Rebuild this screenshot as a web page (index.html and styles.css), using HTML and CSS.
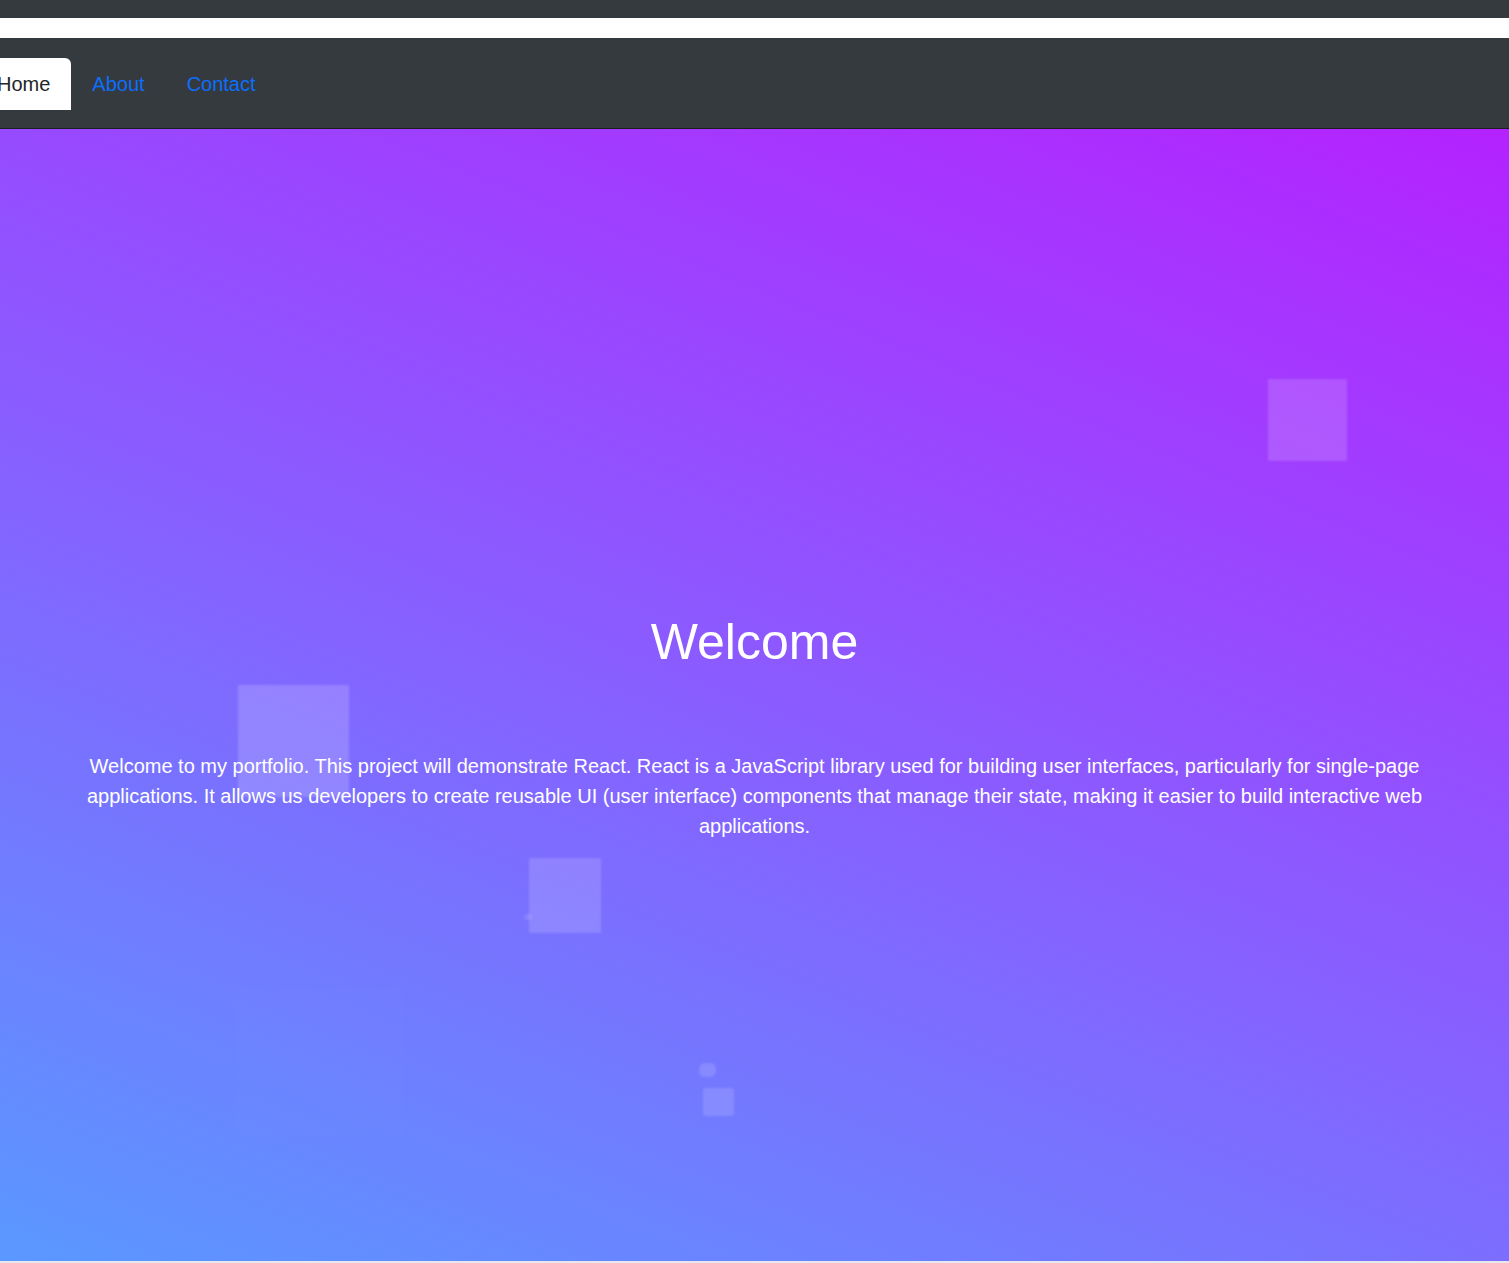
FILE: index.html
```html
<!DOCTYPE html>
<html lang="en">
<head>
<meta charset="utf-8">
<title>Portfolio</title>
<link rel="stylesheet" href="styles.css">
</head>
<body>
  <div class="topbar"></div>
  <div class="strip"></div>
  <nav class="navbar">
    <ul class="tabs">
      <li><a class="tab active" href="#">Home</a></li>
      <li><a class="tab" href="#">About</a></li>
      <li><a class="tab" href="#">Contact</a></li>
    </ul>
  </nav>
  <main class="hero">
    <ul class="squares" aria-hidden="true">
      <li class="sq sq1"></li>
      <li class="sq sq2"></li>
      <li class="sq sq3"></li>
      <li class="sq sq3b"></li>
      <li class="sq sq4"></li>
      <li class="sq sq5"></li>
      <li class="sq sq6"></li>
    </ul>
    <div class="content">
      <h1 class="title">Welcome</h1>
      <p class="intro">Welcome to my portfolio. This project will demonstrate React. React is a JavaScript library used for building user interfaces, particularly for single-page applications. It allows us developers to create reusable UI (user interface) components that manage their state, making it easier to build interactive web applications.</p>
    </div>
  </main>
  <div class="bottom"></div>
</body>
</html>
```

FILE: styles.css
```css
* { box-sizing: border-box; }

html, body {
  margin: 0;
  padding: 0;
}

body {
  font-family: "Liberation Sans", Arial, sans-serif;
  background: #e6e8ec;
  overflow: hidden;
}

.topbar {
  height: 18px;
  background: #343a3e;
}

.strip {
  height: 20px;
  background: #ffffff;
}

.navbar {
  height: 91px;
  background: #343a3e;
  border-bottom: 1px solid #1b1f22;
  padding-top: 20px;
}

.tabs {
  list-style: none;
  margin: 0 0 0 -24px;
  padding: 0;
  display: flex;
}

.tab {
  display: block;
  padding: 11px 21px;
  font-size: 20px;
  line-height: 30px;
  color: #0d6efd;
  text-decoration: none;
  border-radius: 6px 6px 0 0;
}

.tab.active {
  background: #ffffff;
  color: #212529;
}

.hero {
  position: relative;
  height: 1132px;
  overflow: hidden;
  background: linear-gradient(22deg, #5a98ff 0%, #8a5cff 50%, #b422ff 100%);
  display: flex;
  flex-direction: column;
  justify-content: center;
  padding-top: 63px;
}

.squares {
  position: absolute;
  inset: 0;
  margin: 0;
  padding: 0;
  list-style: none;
}

.sq {
  position: absolute;
  background: rgba(255, 255, 255, 0.16);
  filter: blur(1.2px);
}

.sq1 { left: 1268px; top: 250px; width: 79px; height: 82px; background: rgba(255,255,255,0.15); }
.sq2 { left: 238px; top: 556px; width: 111px; height: 112px; background: rgba(255,255,255,0.17); }
.sq3 { left: 529px; top: 729px; width: 72px; height: 75px; background: rgba(255,255,255,0.15); }
.sq3b { left: 524px; top: 785px; width: 8px; height: 6px; border-radius: 3px; background: rgba(255,255,255,0.12); }
.sq4 { left: 699px; top: 934px; width: 17px; height: 14px; border-radius: 6px; background: rgba(255,255,255,0.14); }
.sq5 { left: 703px; top: 959px; width: 31px; height: 28px; border-radius: 3px; background: rgba(255,255,255,0.14); }
.sq6 { left: 233px; top: 860px; width: 170px; height: 148px; background: rgba(255,255,255,0.012); filter: blur(2px); }

.content {
  position: relative;
  text-align: center;
  color: #ffffff;
  padding: 0 80px;
}

.title {
  margin: 0;
  font-size: 50px;
  line-height: 58px;
  font-weight: 400;
}

.intro {
  margin: 80px 0 0;
  font-size: 20px;
  line-height: 30px;
}

.bottom {
  height: 2px;
  background: #e6e8ec;
}
```
